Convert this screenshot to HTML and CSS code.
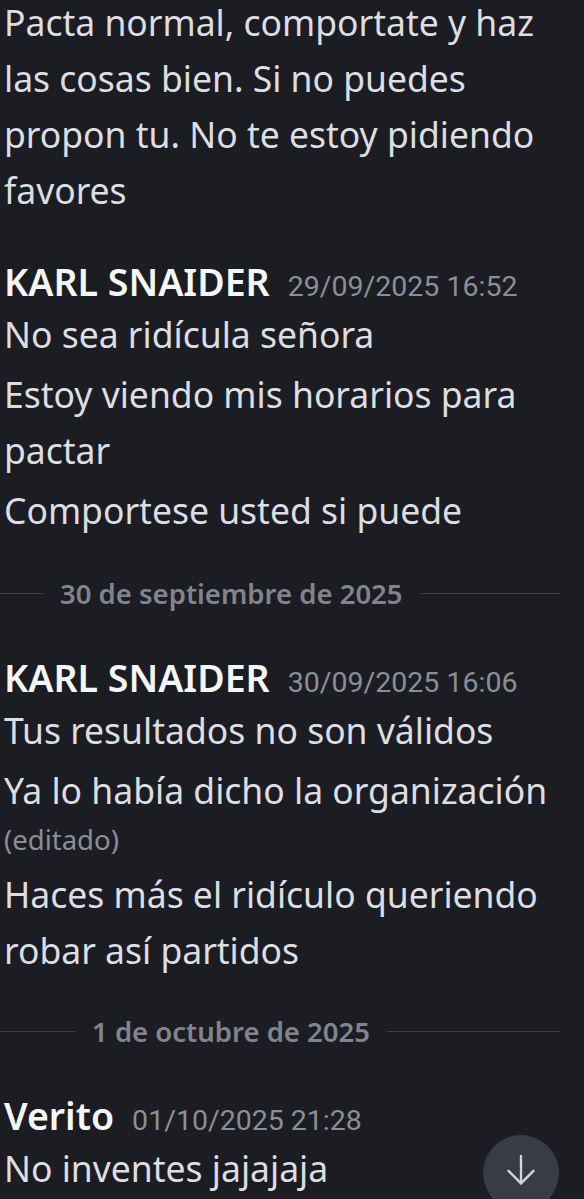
FILE: index.html
```html
<!DOCTYPE html>
<html lang="es">
<head>
<meta charset="utf-8">
<link rel="stylesheet" href="styles.css">
</head>
<body>
<div class="chat">
  <div class="msg top">Pacta normal, comportate y haz las cosas bien. Si no puedes propon tu. No te estoy pidiendo favores</div>

  <div class="group first">
    <div class="header"><span class="name">KARL SNAIDER</span><span class="time">29/09/2025 16:52</span></div>
    <div class="msg">No sea ridícula señora</div>
    <div class="msg">Estoy viendo mis horarios para pactar</div>
    <div class="msg">Comportese usted si puede</div>
  </div>

  <div class="divider"><span class="rule short1"></span><span class="label">30 de septiembre de 2025</span><span class="rule end"></span></div>

  <div class="group">
    <div class="header"><span class="name">KARL SNAIDER</span><span class="time">30/09/2025 16:06</span></div>
    <div class="msg">Tus resultados no son válidos</div>
    <div class="msg">Ya lo había dicho la organización<div class="edited">(editado)</div></div>
    <div class="msg">Haces más el ridículo queriendo robar así partidos</div>
  </div>

  <div class="divider d2"><span class="rule short2"></span><span class="label">1 de octubre de 2025</span><span class="rule end"></span></div>

  <div class="group">
    <div class="header"><span class="name">Verito</span><span class="time">01/10/2025 21:28</span></div>
    <div class="msg">No inventes jajajaja</div>
  </div>
</div>
<button class="scroll-btn" aria-label="Ir abajo">
  <svg width="40" height="40" viewBox="0 0 24 24" fill="none" stroke="#d4d6da" stroke-width="1.4" stroke-linecap="round" stroke-linejoin="round"><path d="M12 3.5v16.5"/><path d="M4.5 12.5l7.5 7.5 7.5-7.5"/></svg>
</button>
</body>
</html>
```
FILE: styles.css
```css
html, body {
  margin: 0;
  padding: 0;
  background: #1c1d22;
  height: 100%;
  overflow: hidden;
}
body {
  font-family: "Noto Sans", "Open Sans", sans-serif;
  color: #dcdee2;
  position: relative;
}
.chat {
  padding: 0 20px 0 4px;
  margin-top: -6px;
}
.msg {
  font-size: 35.5px;
  line-height: 56px;
  margin-top: 4px;
}
.msg.top {
  margin-top: 0;
}
.group {
  margin-top: 42px;
}
.group.first {
  margin-top: 40px;
}
.header {
  display: flex;
  align-items: baseline;
  gap: 18px;
  height: 48px;
  line-height: 48px;
}
.header + .msg {
  margin-top: 0;
}
.name {
  font-size: 37.5px;
  font-weight: 600;
  color: #f5f6f8;
}
.time {
  font-family: Roboto, "Noto Sans", sans-serif;
  font-size: 28.5px;
  color: #8a8e97;
}
.edited {
  font-size: 27.5px;
  line-height: 44px;
  color: #8a8e97;
}
.divider {
  display: flex;
  align-items: center;
  gap: 17px;
  height: 40px;
  margin-top: 35px;
}
.divider.d2 {
  margin-top: 33px;
}
.divider + .group {
  margin-top: 41px;
}
.rule {
  flex: 1;
  height: 1px;
  background: #3c3e45;
}
.rule.end {
  margin-right: 4px;
}
.rule.short1 {
  flex: 0 0 43px;
  margin-left: -4px;
}
.rule.short2 {
  flex: 0 0 75px;
  margin-left: -4px;
}
.label {
  font-size: 27.5px;
  font-weight: 600;
  color: #80848e;
}
.scroll-btn {
  position: absolute;
  left: 483px;
  top: 1135px;
  width: 76px;
  height: 76px;
  border-radius: 50%;
  border: none;
  background: #3a3c43;
  display: flex;
  align-items: center;
  justify-content: center;
  padding: 0 0 6px 0;
}
```
